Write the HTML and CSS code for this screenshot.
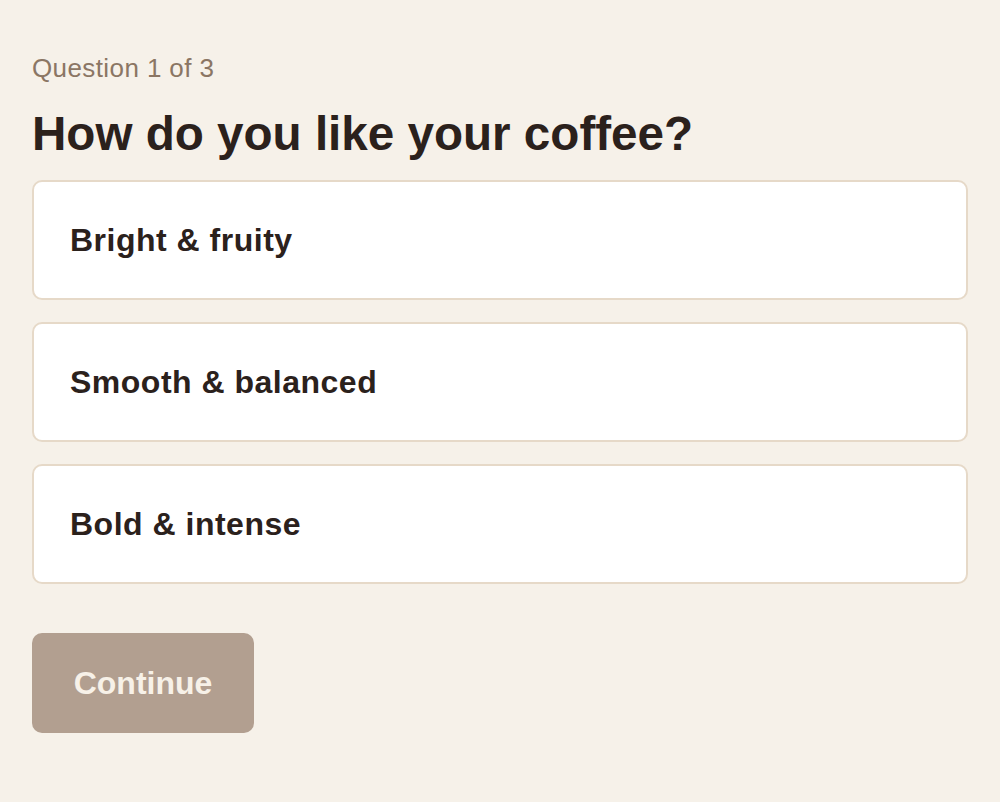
FILE: index.html
```html
<!DOCTYPE html>
<html>
<head>
<meta charset="utf-8">
<link rel="stylesheet" href="styles.css">
</head>
<body>
<main class="quiz">
  <p class="step">Question 1 of 3</p>
  <h1 class="title">How do you like your coffee?</h1>
  <div class="options">
    <button class="option">Bright &amp; fruity</button>
    <button class="option">Smooth &amp; balanced</button>
    <button class="option">Bold &amp; intense</button>
  </div>
  <button class="continue" disabled>Continue</button>
</main>
</body>
</html>
```
FILE: styles.css
```css
html, body {
  margin: 0;
  padding: 0;
  background: #f6f1e9;
  font-family: "Liberation Sans", Arial, sans-serif;
}
.quiz {
  padding: 52px 32px 32px;
  display: flex;
  flex-direction: column;
  align-items: flex-start;
}
.step {
  margin: 0;
  font-size: 26px;
  line-height: 32px;
  letter-spacing: 0.4px;
  color: #8b7664;
}
.title {
  margin: 22px 0 0;
  font-size: 47.6px;
  line-height: 56px;
  font-weight: 700;
  color: #2b211c;
}
.options {
  margin-top: 18px;
  align-self: stretch;
  display: flex;
  flex-direction: column;
  gap: 22px;
}
.option {
  height: 120px;
  box-sizing: border-box;
  background: #ffffff;
  border: 2px solid #e6d9c8;
  border-radius: 10px;
  padding: 0 36px;
  text-align: left;
  font-family: inherit;
  font-size: 32px;
  letter-spacing: 0.5px;
  font-weight: 700;
  color: #2b211c;
}
.continue {
  margin-top: 49px;
  width: 222px;
  height: 100px;
  border: none;
  border-radius: 10px;
  background: #b29f90;
  color: #f7f1e8;
  font-family: inherit;
  font-size: 32px;
  font-weight: 700;
}
```
